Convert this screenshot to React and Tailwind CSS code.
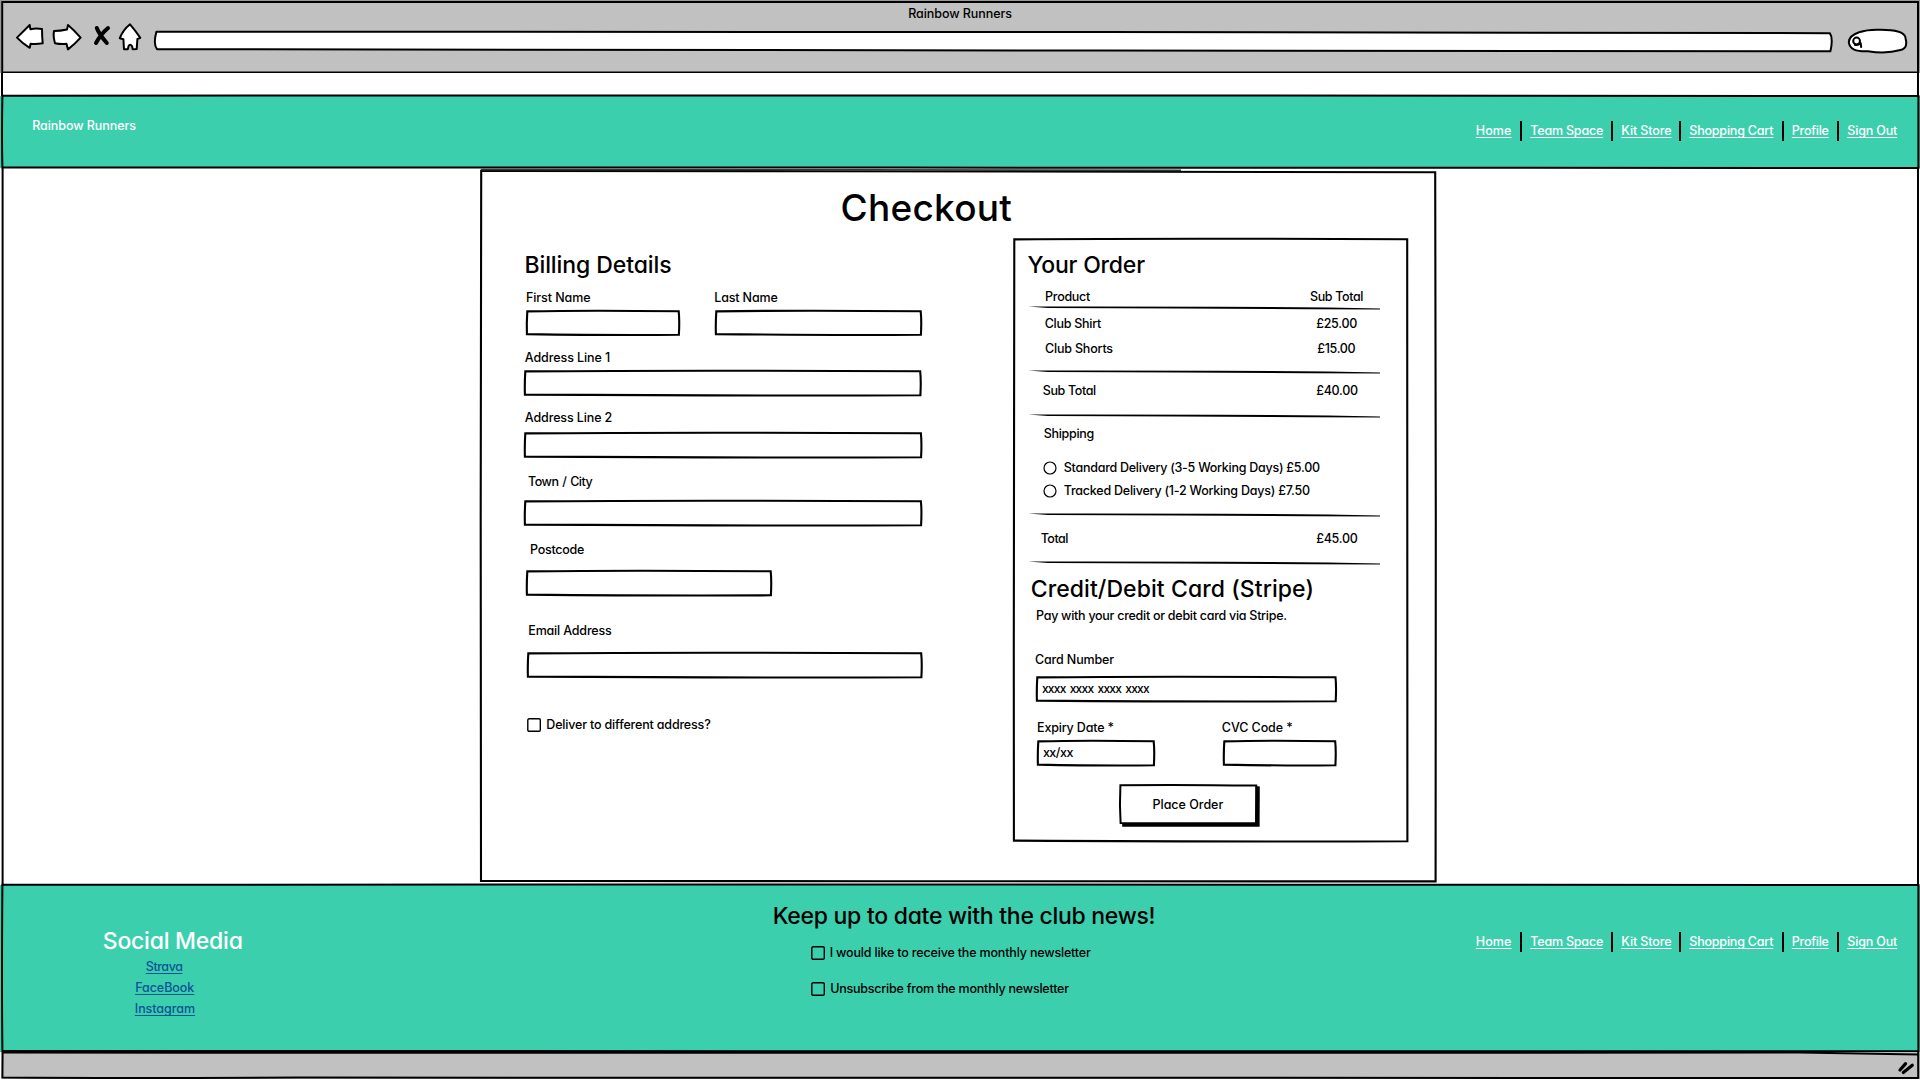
const NAV = [
  { label: 'Home', cell: 'w-[47px] border-r-2', text: 'ml-[0.5px] tracking-[0.11px]' },
  { label: 'Team Space', cell: 'w-[91px] border-r-2 pl-2', text: 'tracking-[-0.2px]' },
  { label: 'Kit Store', cell: 'w-[68px] border-r-2 pl-2', text: 'tracking-[-0.11px]' },
  { label: 'Shopping Cart', cell: 'w-[103px] border-r-2 pl-2', text: 'tracking-[-0.2px]' },
  { label: 'Profile', cell: 'w-[55px] border-r-2 pl-[7.5px]', text: 'tracking-[-0.24px]' },
  { label: 'Sign Out', cell: 'pl-2', text: 'tracking-[-0.17px]' },
];

const SOCIAL = [
  { label: 'Strava', cls: 'ml-[145.8px] mt-1 tracking-[-0.45px]' },
  { label: 'FaceBook', cls: 'ml-[135.2px] mt-[5px] tracking-[-0.06px]' },
  { label: 'Instagram', cls: 'ml-[134.8px] mt-[5px] tracking-[-0.06px]' },
];

const link = 'underline decoration-1 underline-offset-[2px] [text-decoration-skip-ink:none]';

// Hand-drawn rectangle outline that bows a little on every side.
function Outline({ w, h, bow = 0.9 }) {
  const d = `M0.3 0.4 Q${w * 0.4} ${-bow} ${w - 0.8} 0.3 Q${w + bow * 0.2} ${h * 0.4} ${w - 0.6} ${h + 0.3} Q${w * 0.55} ${h + bow} -0.1 ${h - 0.4} Q${-bow * 0.5} ${h * 0.5} 0.3 0.4 Z`;
  return (
    <svg className="pointer-events-none absolute inset-0 overflow-visible" width={w} height={h} viewBox={`0 0 ${w} ${h}`}>
      <path d={d} fill="none" stroke="#000" strokeWidth="2.1" strokeLinejoin="miter" />
    </svg>
  );
}

function Label({ className = '', children }) {
  return <div className={`h-4 whitespace-nowrap text-[12.5px] leading-4 ${className}`}>{children}</div>;
}

function Heading({ className = '', children }) {
  return <h2 className={`h-7 whitespace-nowrap text-[23px] leading-7 ${className}`}>{children}</h2>;
}

function Field({ w, h = 24, className = '', children }) {
  return (
    <div className={`relative h-6 shrink-0 ${className}`}>
      <Outline w={w} h={h} />
      {children}
    </div>
  );
}

function Rule({ className = '' }) {
  return (
    <svg className={`ml-[14.5px] block h-1 w-[352px] shrink-0 ${className}`} viewBox="0 0 352 4">
      <path d="M0 0.5 L60 0.5 L190 0.7 L300 1.4 L352 2.4 L352 3.4 L280 3.2 L150 2.6 L20 2.1 Z" fill="#000" />
    </svg>
  );
}

function Checkbox({ className = '' }) {
  return (
    <svg className={`h-3.5 w-3.5 shrink-0 ${className}`} viewBox="0 0 14 14">
      <rect x="0.8" y="0.8" width="12.5" height="12.5" rx="1.3" fill="none" stroke="#000" strokeWidth="1.4" />
    </svg>
  );
}

function Radio() {
  return (
    <svg className="h-[14px] w-[14px] shrink-0" viewBox="0 0 14 14">
      <circle cx="7" cy="7" r="6" fill="#fff" stroke="#000" strokeWidth="1.2" />
    </svg>
  );
}

function Nav({ className = '' }) {
  return (
    <nav className={`flex h-5 text-white ${className}`}>
      {NAV.map((n) => (
        <div key={n.label} className={`h-5 shrink-0 border-black pt-[2px] ${n.cell}`}>
          <a className={`block w-fit whitespace-nowrap text-[12.5px] leading-4 ${link} ${n.text}`}>{n.label}</a>
        </div>
      ))}
    </nav>
  );
}

function BrowserBar() {
  return (
    <header className="relative flex h-[73px] flex-col items-start bg-[#c1c1c1]">
      <Label className="ml-[908.2px] mt-1.5 tracking-[-0.06px]">Rainbow Runners</Label>
      <svg className="absolute inset-0" width="1920" height="73" viewBox="0 0 1920 73" fill="#fff" stroke="#000" strokeWidth="2" strokeLinejoin="round" strokeLinecap="round">
        <path d="M17 37.6 L29.7 25 L30.4 29.2 Q36 28 42 29 Q42 36 42.7 43.3 Q36 44.5 30.6 43.8 L29.7 47.8 Q22 43 17 37.6Z" />
        <path d="M54 31 Q53 36 55 43.2 Q61 44.5 66.5 43.8 L68 49.4 Q75 44 80.6 37.7 Q74 30 68 25 L67 29.5 Q60 31 54 31Z" />
        <path d="M96.8 28 Q99 34 106.8 43 M108 28 Q101 34 96 43" fill="none" strokeWidth="4" />
        <path d="M130 24.3 Q135 30 140.3 37.8 L137.4 39 L136.7 49 L132.7 49.3 L132 46 Q130 43.5 128.6 46 L127.8 49.3 L124 49.3 L123.4 39.3 L119.8 38.2 Q123 30 130 24.3Z" />
        <path d="M156.4 31.7 L1100 32 L1829.8 33.2 Q1833.4 38 1830.4 51.3 L1100 50.6 L157 49.2 Q153 44 156.4 31.7Z" />
        <path d="M1848.8 42 C1849.5 32.5 1866 29.6 1878 29.8 C1892 29.5 1903.5 31 1905.3 37 C1907 43 1907 48.5 1900.5 50 C1890 53 1876 52.5 1868 51.2 C1856 51.6 1849.5 49.5 1848.8 42Z" />
        <circle cx="1856.6" cy="41" r="3.4" />
        <path d="M1854.8 44.8 Q1858 45.8 1860.6 43 L1861.2 47" fill="none" />
      </svg>
      <svg className="absolute inset-0" width="1920" height="73" viewBox="0 0 1920 73" fill="none" stroke="#000">
        <path d="M0 0.5H1920 M0.5 0V73 M1919.5 0V73" stroke="#999" />
        <path d="M2.2 73 V2 H1918 V73" strokeWidth="2" />
        <path d="M2 72.5 H1919" strokeWidth="2" />
      </svg>
    </header>
  );
}

function BillingColumn() {
  return (
    <section className="flex w-[532.5px] shrink-0 flex-col items-start">
      <Heading className="ml-[43.4px] mt-[22px] tracking-[-0.08px]">Billing Details</Heading>
      <div className="mt-[11px] flex">
        <div className="w-[233.3px]">
          <Label className="ml-[45px] tracking-[-0.09px]">First Name</Label>
        </div>
        <Label className="tracking-[-0.16px]">Last Name</Label>
      </div>
      <div className="mt-[4.5px] flex">
        <Field w={152.5} h={23.5} className="ml-[45.5px] w-[152.5px]" />
        <Field w={205.5} h={23.5} className="ml-[36.5px] w-[205.5px]" />
      </div>
      <Label className="ml-[43.8px] mt-[15.5px] tracking-[-0.09px]">Address Line 1</Label>
      <Field w={396} className="ml-[44.3px] mt-[5.3px] w-[396px]" />
      <Label className="ml-[43.8px] mt-[14.7px] tracking-[-0.12px]">Address Line 2</Label>
      <Field w={396.7} className="ml-[43.6px] mt-[7.5px] w-[396.7px]" />
      <Label className="ml-[47px] mt-[16.5px] tracking-[-0.5px] [word-spacing:1px]">Town / City</Label>
      <Field w={396.7} className="ml-[43.6px] mt-[11.5px] w-[396.7px]" />
      <Label className="ml-[49px] mt-[16.5px] tracking-[-0.25px]">Postcode</Label>
      <Field w={244.5} className="ml-[45.5px] mt-[13.5px] w-[244.5px]" />
      <Label className="ml-[47.3px] mt-[27.5px] tracking-[-0.18px]">Email Address</Label>
      <Field w={394} className="ml-[46.5px] mt-[14.5px] w-[394px]" />
      <div className="ml-[46px] mt-[39.5px] flex">
        <Checkbox className="mt-[1px]" />
        <Label className="ml-[5.3px] tracking-[-0.17px]">Deliver to different address?</Label>
      </div>
    </section>
  );
}

function OrderRow({ className = '', name, nameCls = '', price, priceCls = '' }) {
  return (
    <div className={`grid grid-cols-[296.5px_1fr] ${className}`}>
      <Label className={nameCls}>{name}</Label>
      <Label className={priceCls}>{price}</Label>
    </div>
  );
}

function OrderPanel() {
  return (
    <section className="relative mt-[10px] flex h-[602px] w-[394px] shrink-0 flex-col">
      <Outline w={394} h={602} bow={0.9} />
      <Heading className="ml-[13.9px] mt-3 tracking-[-0.2px]">Your Order</Heading>
      <OrderRow className="mt-[10px]" name="Product" nameCls="ml-[31.6px] tracking-[-0.28px]" price="Sub Total" priceCls="tracking-[-0.36px]" />
      <Rule className="mt-[1px]" />
      <OrderRow className="mt-1.5" name="Club Shirt" nameCls="ml-[31.2px] tracking-[-0.26px]" price="£25.00" priceCls="ml-[6.2px] tracking-[-0.26px]" />
      <OrderRow className="mt-[9px]" name="Club Shorts" nameCls="ml-[31.6px] tracking-[-0.2px]" price="£15.00" priceCls="ml-[7.2px] tracking-[-0.3px]" />
      <Rule className="mt-[13px]" />
      <OrderRow className="mt-[9px]" name="Sub Total" nameCls="ml-[29.2px] tracking-[-0.36px]" price="£40.00" priceCls="ml-[6.2px] tracking-[-0.28px]" />
      <Rule className="mt-[15px]" />
      <Label className="ml-[30.2px] mt-2 tracking-[-0.28px]">Shipping</Label>
      <div className="ml-[29.6px] mt-[18px] flex items-center">
        <Radio />
        <Label className="ml-[6.7px] tracking-[-0.26px]">Standard Delivery (3-5 Working Days) £5.00</Label>
      </div>
      <div className="ml-[29.6px] mt-[7px] flex items-center">
        <Radio />
        <Label className="ml-[6.7px] tracking-[-0.23px]">Tracked Delivery (1-2 Working Days) £7.50</Label>
      </div>
      <Rule className="mt-[13.5px]" />
      <OrderRow className="mt-[14.5px]" name="Total" nameCls="ml-[27.2px] tracking-[-0.5px]" price="£45.00" priceCls="ml-[6.2px] tracking-[-0.28px]" />
      <Rule className="mt-[13.5px]" />
      <Heading className="ml-[17.2px] mt-[10.5px] tracking-[0.08px]">Credit/Debit Card (Stripe)</Heading>
      <Label className="ml-[22.5px] mt-[5px] tracking-[-0.27px]">Pay with your credit or debit card via Stripe.</Label>
      <Label className="ml-[21.5px] mt-7 tracking-[-0.14px]">Card Number</Label>
      <Field w={299.3} className="ml-[23.2px] mt-[9.3px] w-[299.3px]">
        <div className="h-4 whitespace-nowrap pl-[5.2px] pt-[3.5px] text-xs leading-4 tracking-[-0.75px] [word-spacing:1.6px]">xxxx xxxx xxxx xxxx</div>
      </Field>
      <div className="mt-[18.7px] flex">
        <div className="w-[208.3px]">
          <Label className="ml-[23.5px] tracking-[-0.16px]">Expiry Date *</Label>
        </div>
        <Label className="tracking-[-0.08px]">CVC Code *</Label>
      </div>
      <div className="mt-[5.3px] flex">
        <Field w={116.5} className="ml-[24px] w-[116.5px]">
          <Label className="pl-[5.4px] pt-[3.7px] tracking-[-0.5px]">xx/xx</Label>
        </Field>
        <Field w={112} className="ml-[69.9px] w-[112px]" />
      </div>
      <button className="relative ml-[106.5px] mt-[19.4px] h-[38.3px] w-[136px]">
        <svg className="absolute inset-0 overflow-visible" width="136" height="38.3" viewBox="0 0 136 38.3">
          <path d="M2 3 L2.2 41.8 L139.6 41.8 L139.8 1.5 L136 1Z" fill="#000" />
          <path d="M0.4 0.2 Q60 -0.6 136.2 0.6 L136 38.3 L0.6 38 Q-0.6 20 0.4 0.2Z" fill="#fff" stroke="#000" strokeWidth="2" strokeLinejoin="miter" />
        </svg>
        <Label className="relative top-[1px] ml-[32.5px] text-left tracking-[-0.01px]">Place Order</Label>
      </button>
    </section>
  );
}

function Footer() {
  return (
    <footer className="relative flex h-[167px] bg-[#3ccfae]">
      <div className="w-[772.7px] shrink-0">
        <Heading className="ml-[102.8px] mt-[42px] tracking-[-0.24px] text-white">Social Media</Heading>
        {SOCIAL.map((s) => (
          <a key={s.label} className={`block h-4 w-fit whitespace-nowrap text-[12.5px] leading-4 text-[#0b5394] ${link} ${s.cls}`}>{s.label}</a>
        ))}
      </div>
      <div className="w-[702.6px] shrink-0">
        <Heading className="mt-[17px] tracking-[-0.28px]">Keep up to date with the club news!</Heading>
        <div className="ml-[38.5px] mt-[15px] flex">
          <Checkbox className="mt-[1px]" />
          <Label className="ml-[4.5px] tracking-[-0.17px]">I would like to receive the monthly newsletter</Label>
        </div>
        <div className="ml-[38.5px] mt-5 flex">
          <Checkbox className="mt-[1px]" />
          <Label className="ml-[5px] tracking-[-0.22px]">Unsubscribe from the monthly newsletter</Label>
        </div>
      </div>
      <Nav className="mt-[47.3px]" />
      <svg className="absolute inset-0 overflow-visible" width="1920" height="167" viewBox="0 0 1920 167" fill="none" stroke="#000" strokeWidth="2">
        <path d="M2.4 -0.3 L900 -0.5 L1918.4 0 L1918.4 166.3 L900 166.2 L2.4 166 Q1.6 100 2.4 -0.3Z" />
      </svg>
    </footer>
  );
}

function StatusBar() {
  return (
    <div className="relative h-7 bg-[#c1c1c1]">
      <svg className="absolute inset-0 overflow-visible" width="1920" height="28" viewBox="0 0 1920 28" fill="none" stroke="#000" strokeWidth="2">
        <path d="M0 26.9 H1920 V28 H0Z M0 0 H1.5 V28 H0Z" fill="#fff" stroke="none" />
        <path d="M2.6 0.5 L200 0.8 L1800 0.6 L1918 2.6" />
        <path d="M2.6 0 L2.4 25.6 Q120 26.4 300 25.6 L1918.2 26 L1918.2 0" />
        <path d="M1900 18 L1905.6 11.6 M1903.3 20.6 L1912.3 13.2" strokeWidth="3.2" strokeLinecap="round" />
      </svg>
    </div>
  );
}

export default function App() {
  return (
    <div className="flex h-[1080px] w-[1920px] flex-col overflow-hidden bg-white font-['Inter',sans-serif] font-medium text-black [font-feature-settings:'cv11']">
      <BrowserBar />
      <div className="h-[23px] px-[1px]">
        <div className="h-full border-x-2 border-black" />
      </div>
      <div className="relative flex h-[72px] bg-[#3ccfae]">
        <div className="w-[1475.3px] shrink-0">
          <Label className="ml-[32.2px] mt-[22px] tracking-[-0.06px] text-white">Rainbow Runners</Label>
        </div>
        <Nav className="mt-[25.3px]" />
        <svg className="absolute inset-0 overflow-visible" width="1920" height="72" viewBox="0 0 1920 72" fill="none" stroke="#000" strokeWidth="2">
          <path d="M2.4 -0.3 L900 -0.6 L1918.4 0 L1918.4 72 L900 71.6 L2.4 71.6 Q1.6 40 2.4 -0.3Z" />
        </svg>
      </div>
      <main className="relative h-[717px]">
        <svg className="absolute inset-0" width="1920" height="717" viewBox="0 0 1920 717" stroke="#000" strokeWidth="2">
          <path d="M2.6 0V717 M1918 0V717" />
        </svg>
        <div className="relative ml-[481px] flex h-[713px] w-[955px] flex-col pt-[17px]">
          <svg className="absolute inset-0 overflow-visible" width="955" height="713" viewBox="0 0 955 713" fill="none" stroke="#000" strokeWidth="2.1">
            <path d="M0.2 2.8 L340 3.2 L954.2 4.2 L954.8 350 L954.6 713.4 L400 713.2 L0 713 L-0.3 350Z" />
            <path d="M0 1.6 L380 1.8 L700 2.4" stroke="#333" strokeWidth="1.6" />
          </svg>
          <h1 className="ml-[359.6px] h-11 whitespace-nowrap text-[37px] leading-[45px] tracking-[0.25px]">Checkout</h1>
          <div className="flex">
            <BillingColumn />
            <OrderPanel />
          </div>
        </div>
      </main>
      <Footer />
      <StatusBar />
    </div>
  );
}
